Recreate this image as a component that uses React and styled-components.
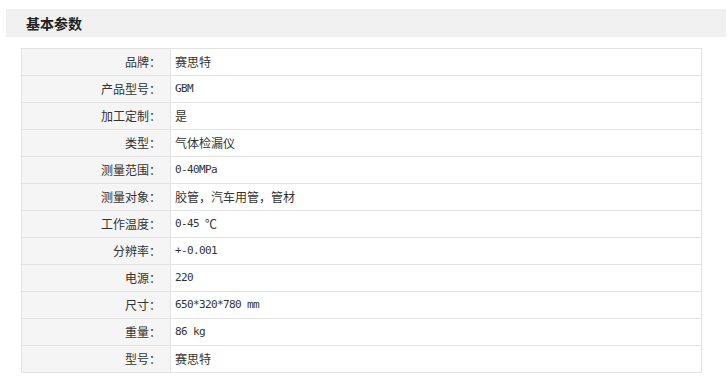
import React from "react";
import styled, { createGlobalStyle } from "styled-components";

const Global = createGlobalStyle`
  html, body { margin: 0; padding: 0; background: #fff; }
  body { font-family: "Noto Sans CJK SC", "Liberation Sans", sans-serif; color: #333; }
`;

const Page = styled.div`
  padding: 9px 1px 0 6px;
  width: 727px;
  box-sizing: border-box;
`;

const Header = styled.div`
  height: 28px;
  background: #f0f0f0;
  display: flex;
  align-items: center;
  padding-left: 20px;
`;

const Title = styled.h3`
  margin: 0;
  font-size: 14px;
  font-weight: bold;
  color: #222;
  line-height: 28px;
`;

const Table = styled.div`
  margin: 11px 0 0 15px;
  width: 681px;
  box-sizing: border-box;
  border: 1px solid #e3e3e3;
  border-bottom: none;
`;

const Row = styled.div`
  display: grid;
  grid-template-columns: 149px 1fr;
  grid-template-rows: 26px;
  height: 27px;
  box-sizing: border-box;
  border-bottom: 1px solid #e3e3e3;
`;

const Label = styled.div`
  background: #f5f5f5;
  border-right: 1px solid #e3e3e3;
  display: flex;
  align-items: center;
  justify-content: flex-end;
  padding-right: 9px;
  font-size: 12px;
  line-height: 16px;
  color: #333;
  white-space: nowrap;
  overflow: hidden;
`;

const Value = styled.div`
  background: #fff;
  display: flex;
  align-items: center;
  padding-left: 4px;
  font-size: 12px;
  line-height: 16px;
  color: #333;
  white-space: pre;
  overflow: hidden;
`;

const Mono = styled.span`
  font-family: "DejaVu Sans Mono", "Liberation Mono", monospace;
  font-size: 11px;
  letter-spacing: -0.62px;
`;

const rows = [
  ["品牌：", "赛思特"],
  ["产品型号：", "GBM"],
  ["加工定制：", "是"],
  ["类型：", "气体检漏仪"],
  ["测量范围：", "0-40MPa"],
  ["测量对象：", "胶管，汽车用管，管材"],
  ["工作温度：", "0-45 ℃"],
  ["分辨率：", "+-0.001"],
  ["电源：", "220"],
  ["尺寸：", "650*320*780 mm"],
  ["重量：", "86 kg"],
  ["型号：", "赛思特"],
];

function Mixed({ text }) {
  const parts = text.match(/[\x20-\x7e]+|[^\x20-\x7e]+/g) || [];
  return parts.map((p, i) =>
    /^[\x20-\x7e]+$/.test(p) ? <Mono key={i}>{p}</Mono> : <span key={i}>{p}</span>
  );
}

export default function App() {
  return (
    <>
      <Global />
      <Page>
        <Header>
          <Title>基本参数</Title>
        </Header>
        <Table>
          {rows.map(([k, v]) => (
            <Row key={k}>
              <Label>{k}</Label>
              <Value>
                <Mixed text={v} />
              </Value>
            </Row>
          ))}
        </Table>
      </Page>
    </>
  );
}
